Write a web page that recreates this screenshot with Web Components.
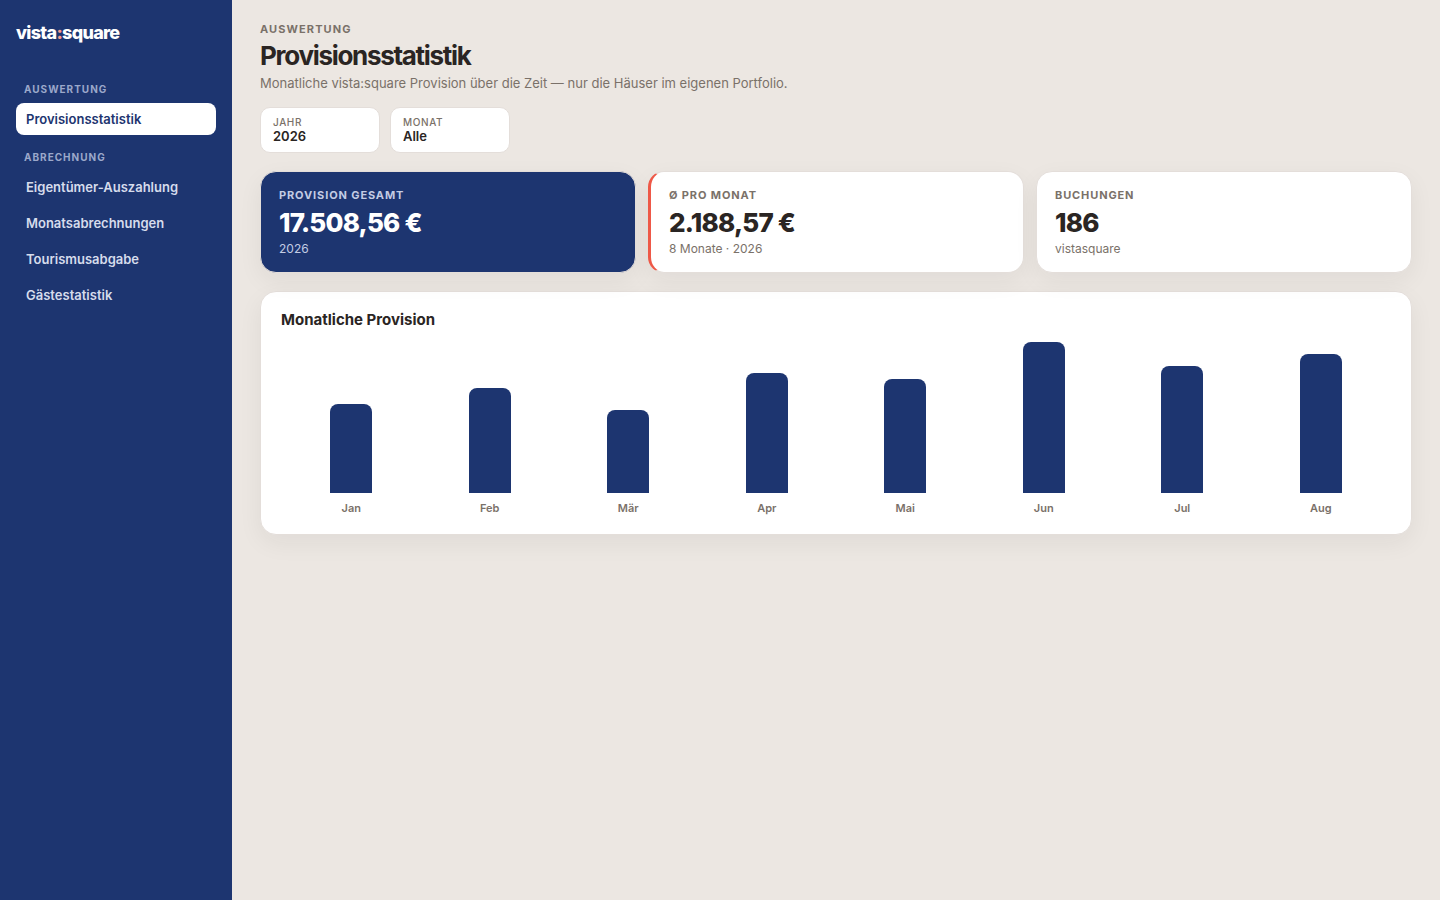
<!DOCTYPE html>
<html lang="de">
<head>
<meta charset="utf-8">
<meta name="viewport" content="width=device-width, initial-scale=1">
<title>Provisionsstatistik · vista:square</title>
<style>
  :root {
    --navy: #1d3570;
    --coral: #ee5847;
    --ink: #2a2523;
    --muted: #7a7169;
    --sand: #ece7e2;
    --line: #e4deda;
  }
  body {
    margin: 0;
    background: var(--sand);
    color: var(--ink);
    font-family: Inter, "Liberation Sans", sans-serif;
  }
</style>
</head>
<body>
<vs-app>
  <vs-sidebar slot="sidebar">
    <vs-nav-group label="Auswertung">
      <vs-nav-item href="#provision" active>Provisionsstatistik</vs-nav-item>
    </vs-nav-group>
    <vs-nav-group label="Abrechnung">
      <vs-nav-item href="#auszahlung">Eigentümer-Auszahlung</vs-nav-item>
      <vs-nav-item href="#monat">Monatsabrechnungen</vs-nav-item>
      <vs-nav-item href="#tourismus">Tourismusabgabe</vs-nav-item>
      <vs-nav-item href="#gaeste">Gästestatistik</vs-nav-item>
    </vs-nav-group>
  </vs-sidebar>
  <vs-page-header>
    <span slot="eyebrow">Auswertung</span>
    <span slot="title">Provisionsstatistik</span>
    Monatliche vista:square Provision über die Zeit — nur die Häuser im eigenen Portfolio.
  </vs-page-header>
  <vs-filter-bar>
    <vs-filter label="Jahr" options="2026"></vs-filter>
    <vs-filter label="Monat" options="Alle"></vs-filter>
  </vs-filter-bar>
  <vs-kpi-row>
    <vs-kpi variant="solid" label="Provision gesamt" value="17.508,56 €">2026</vs-kpi>
    <vs-kpi variant="accent" label="Ø pro Monat" value="2.188,57 €">8 Monate · 2026</vs-kpi>
    <vs-kpi label="Buchungen" value="186">vistasquare</vs-kpi>
  </vs-kpi-row>
  <vs-chart heading="Monatliche Provision">
    <vs-bar label="Jan" size="89"></vs-bar>
    <vs-bar label="Feb" size="105"></vs-bar>
    <vs-bar label="Mär" size="83"></vs-bar>
    <vs-bar label="Apr" size="120"></vs-bar>
    <vs-bar label="Mai" size="114"></vs-bar>
    <vs-bar label="Jun" size="151"></vs-bar>
    <vs-bar label="Jul" size="127"></vs-bar>
    <vs-bar label="Aug" size="139"></vs-bar>
  </vs-chart>
</vs-app>

<script>
const define = (name, render, setup) => {
  customElements.define(name, class extends HTMLElement {
    constructor() {
      super();
      this.attachShadow({ mode: "open" });
    }
    connectedCallback() {
      if (this.shadowRoot.childNodes.length) return;
      this.shadowRoot.innerHTML = render(this);
      if (setup) setup(this);
    }
  });
};
const attr = (el, name) => el.getAttribute(name) || "";

define("vs-app", () => `
  <style>
    :host { display: grid; grid-template-columns: 232px minmax(0, 1fr); min-height: 100vh; }
    main { padding: 20px 28px; }
  </style>
  <slot name="sidebar"></slot>
  <main><slot></slot></main>`);

define("vs-sidebar", () => `
  <style>
    :host { display: block; box-sizing: border-box; padding: 20px 16px; background: var(--navy); color: #fff; }
    a { display: block; margin-bottom: 37px; color: inherit; text-decoration: none;
        font-size: 18px; line-height: 26px; font-weight: 800; letter-spacing: -0.04em; }
    b { color: #fb9a8b; font-weight: inherit; }
    nav { display: grid; gap: 16px; }
  </style>
  <a href="#start">vista<b>:</b>square</a>
  <nav aria-label="Hauptmenü"><slot></slot></nav>`);

define("vs-nav-group", el => `
  <style>
    :host { display: grid; gap: 4px; }
    h2 { margin: 0; padding: 0 8px 4px; font-size: 10px; line-height: 12px; font-weight: 700;
         letter-spacing: 0.1em; text-transform: uppercase; color: #9ba8ca; }
  </style>
  <h2>${attr(el, "label")}</h2>
  <slot></slot>`);

define("vs-nav-item", el => `
  <style>
    :host { display: block; }
    a { display: block; padding: 6px 10px; border-radius: 8px; color: #d6dcec;
        font-size: 13px; line-height: 20px; font-weight: 600; text-decoration: none; }
    :host([active]) a { background: #fff; color: var(--navy); }
  </style>
  <a href="${attr(el, "href")}"><slot></slot></a>`);

define("vs-page-header", () => `
  <style>
    :host { display: block; margin-bottom: 14px; }
    .eyebrow { font-size: 11px; line-height: 18px; font-weight: 700; letter-spacing: 0.1em;
               text-transform: uppercase; color: var(--muted); }
    h1 { margin: 0; padding: 1px 0; font-size: 26px; line-height: 34px; font-weight: 700; letter-spacing: -0.05em; }
    p { margin: 0; font-size: 13px; line-height: 19px; color: var(--muted); }
  </style>
  <div class="eyebrow"><slot name="eyebrow"></slot></div>
  <h1><slot name="title"></slot></h1>
  <p><slot></slot></p>`);

define("vs-filter-bar", () => `
  <style>:host { display: flex; flex-wrap: wrap; gap: 10px; margin-bottom: 18px; }</style>
  <slot></slot>`);

define("vs-filter", el => `
  <style>
    :host { display: block; box-sizing: border-box; width: 120px; padding: 8px 12px;
            background: #fff; border: 1px solid var(--line); border-radius: 10px; }
    label { display: block; font-size: 10px; line-height: 12px; font-weight: 500;
            letter-spacing: 0.06em; text-transform: uppercase; color: var(--muted); }
    select { display: block; appearance: none; width: 100%; height: 16px; margin: 0; padding: 0; border: 0;
             background: none; color: var(--ink); font: 600 13px/16px Inter, sans-serif; }
  </style>
  <label for="field">${attr(el, "label")}</label>
  <select id="field">${attr(el, "options").split(",").map(o => `<option>${o}</option>`).join("")}</select>`);

define("vs-kpi-row", () => `
  <style>:host { display: grid; grid-template-columns: repeat(3, minmax(0, 1fr)); gap: 12px; margin-bottom: 18px; }</style>
  <slot></slot>`);

define("vs-kpi", el => `
  <style>
    :host { display: block; padding: 15px 18px; background: #fff; border: 1px solid var(--line);
            border-radius: 16px; box-shadow: 0 8px 24px rgba(42, 37, 35, 0.06); }
    :host([variant="solid"]) { background: var(--navy); color: #fff; --muted: #c3cce4; }
    :host([variant="accent"]) { border-left: 3px solid var(--coral); }
    h3, p { margin: 0; color: var(--muted); }
    h3 { font-size: 11px; line-height: 16px; font-weight: 700; letter-spacing: 0.08em; text-transform: uppercase; }
    strong { display: block; padding-top: 2px; font-size: 26px; line-height: 36px; font-weight: 800; letter-spacing: -0.03em; }
    p { font-size: 12px; line-height: 16px; }
  </style>
  <h3>${attr(el, "label")}</h3>
  <strong>${attr(el, "value")}</strong>
  <p><slot></slot></p>`);

define("vs-chart", el => `
  <style>
    :host { display: block; padding: 16px 20px 18px; background: #fff; border: 1px solid var(--line);
            border-radius: 16px; box-shadow: 0 8px 24px rgba(42, 37, 35, 0.06); }
    h2 { margin: 0 0 10px; font-size: 15px; line-height: 24px; font-weight: 700; }
    .plot { display: grid; grid-auto-flow: column; grid-auto-columns: minmax(0, 1fr); align-items: end; padding: 0 1px; }
  </style>
  <h2>${attr(el, "heading")}</h2>
  <div class="plot"><slot></slot></div>`);

define("vs-bar", el => `
  <style>
    :host { display: grid; justify-items: center; gap: 7px; }
    .bar { width: 42px; background: var(--navy); border-radius: 8px 8px 0 0; }
    .label { font-size: 11px; line-height: 16px; font-weight: 600; color: var(--muted); }
  </style>
  <div class="bar"></div>
  <div class="label">${attr(el, "label")}</div>`,
  el => { el.shadowRoot.querySelector(".bar").style.height = attr(el, "size") + "px"; });
</script>
</body>
</html>
